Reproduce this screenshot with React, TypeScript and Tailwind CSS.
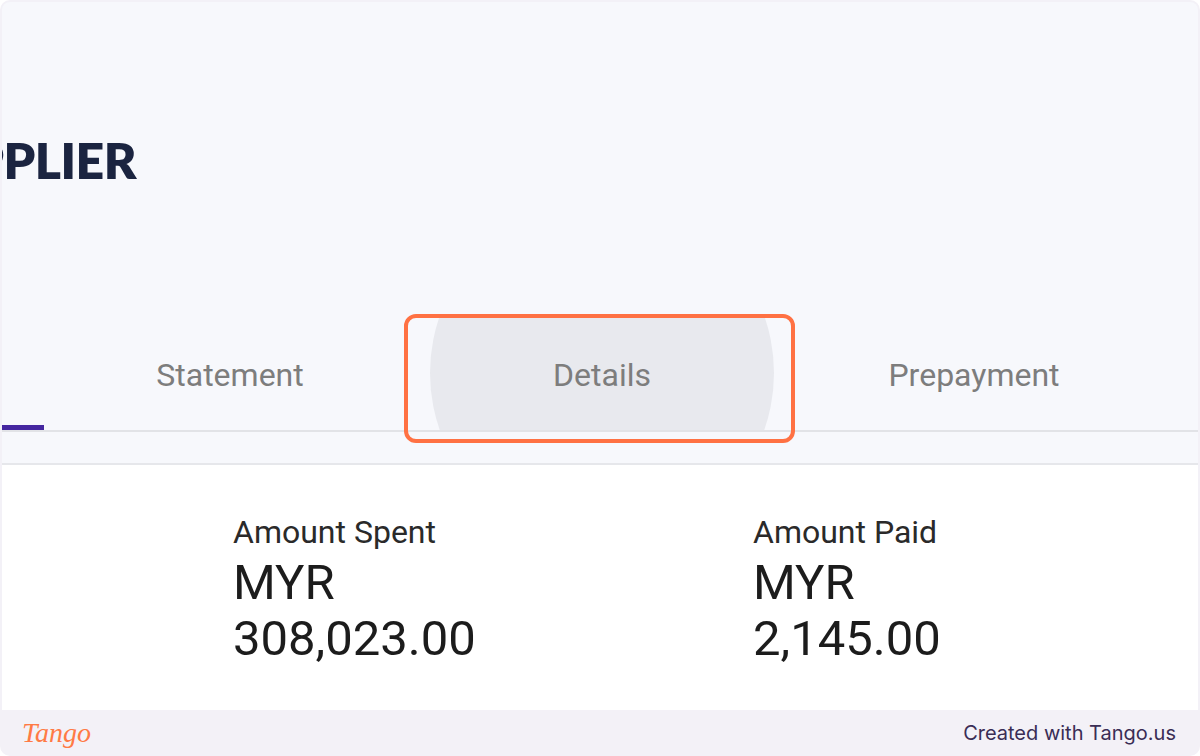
import React from "react";

const tabs = ["Summary", "Statement", "Details", "Prepayment"];

const amounts = [
  { label: "Amount Spent", currency: "MYR", value: "308,023.00" },
  { label: "Amount Paid", currency: "MYR", value: "2,145.00" },
];

export default function App() {
  return (
    <div className="relative flex h-[756px] w-[1200px] flex-col overflow-hidden rounded-[10px] bg-[#f3f1f7] px-[2px] pt-[2px]">
      {/* Captured page */}
      <div className="flex flex-1 flex-col overflow-hidden rounded-t-[8px] bg-[#f7f8fc]">
        {/* Title */}
        <div className="h-[316px] overflow-hidden pt-[128px]">
          <h1
            className="ml-[-94px] whitespace-nowrap text-[50px] font-extrabold leading-[60px] tracking-[-0.5px] text-[#1b2440]"
            style={{ fontFamily: "Lato, sans-serif" }}
          >
            SUPPLIER
          </h1>
        </div>

        {/* Tabs */}
        <div className="relative h-[114px] border-b-2 border-[#e2e3e7]">
          <div className="ml-[-330px] flex h-[112px]">
            {tabs.map((tab, i) => (
              <div
                key={tab}
                className="relative flex w-[372px] shrink-0 items-center justify-center overflow-hidden"
              >
                {i === 2 && (
                  <div className="absolute left-[14px] top-[-1px] h-[344px] w-[344px] -translate-y-[116px] rounded-full bg-[#e8e9ee]" />
                )}
                <span
                  className="relative pt-[2px] text-[32px] text-[#7d7d7d]"
                  style={{ fontFamily: "Roboto, sans-serif" }}
                >
                  {tab}
                </span>
                {i === 0 && (
                  <div className="absolute bottom-0 left-0 h-[5px] w-full bg-[#4527a0]" />
                )}
              </div>
            ))}
          </div>
        </div>

        <div className="h-[33px] border-b-2 border-[#e6e7eb]" />

        {/* Amounts */}
        <div className="flex flex-1 bg-white pl-[231px] pt-[47px]" style={{ fontFamily: "Roboto, sans-serif" }}>
          {amounts.map((a) => (
            <div key={a.label} className="w-[520px] shrink-0 text-[#1c1c1c]">
              <div className="text-[32px] leading-[40px] text-[#2a2a2a]">{a.label}</div>
              <div className="mt-[3px] text-[49px] leading-[56px]">{a.currency}</div>
              <div className="text-[49px] leading-[56px]">{a.value}</div>
            </div>
          ))}
        </div>
      </div>

      {/* Footer */}
      <div className="flex h-[46px] shrink-0 items-center justify-between pl-[20px] pr-[22px]">
        <span
          className="text-[28px] italic leading-none text-[#ff7a45]"
          style={{ fontFamily: "'Liberation Serif', serif", fontWeight: 300 }}
        >
          Tango
        </span>
        <span
          className="text-[20px] text-[#3a2d55]"
          style={{ fontFamily: "Inter, sans-serif" }}
        >
          Created with Tango.us
        </span>
      </div>

      {/* Highlight */}
      <div className="pointer-events-none absolute left-[404px] top-[314px] h-[129px] w-[391px] rounded-[12px] border-4 border-[#ff7143]" />
    </div>
  );
}
